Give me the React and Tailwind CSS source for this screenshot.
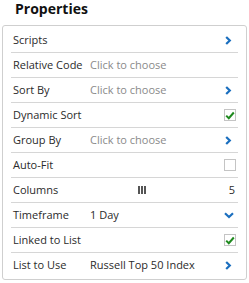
import React from "react";

function ChevronRight() {
  return (
    <svg width="7" height="9" viewBox="0 0 7 9" className="text-[#1b6fbf]">
      <path d="M1.2 1 L4.8 4.5 L1.2 8" fill="none" stroke="currentColor" strokeWidth="2.2" />
    </svg>
  );
}

function ChevronDown() {
  return (
    <svg width="10" height="7" viewBox="0 0 10 7" className="text-[#1b6fbf]">
      <path d="M1 1.3 L5 5 L9 1.3" fill="none" stroke="currentColor" strokeWidth="2.2" />
    </svg>
  );
}

function Checkbox({ checked }) {
  return (
    <div className="w-[12px] h-[12px] border border-[#c4c4c4] bg-white flex items-center justify-center">
      {checked && (
        <svg width="10" height="9" viewBox="0 0 10 9">
          <path d="M1.2 4.6 L3.8 7.2 L8.8 1.5" fill="none" stroke="#1f8a1f" strokeWidth="2" />
        </svg>
      )}
    </div>
  );
}

const rows = [
  { label: "Scripts", right: "chevron" },
  { label: "Relative Code", value: "Click to choose", muted: true },
  { label: "Sort By", value: "Click to choose", muted: true, right: "chevron" },
  { label: "Dynamic Sort", right: "checked" },
  { label: "Group By", value: "Click to choose", muted: true, right: "chevron" },
  { label: "Auto-Fit", right: "unchecked" },
  { label: "Columns", right: "columns" },
  { label: "Timeframe", value: "1 Day", right: "down" },
  { label: "Linked to List", right: "checked" },
  { label: "List to Use", value: "Russell Top 50 Index", right: "chevron" },
];

export default function App() {
  return (
    <div className="w-[249px] h-[283px] bg-white font-['Open_Sans',sans-serif] text-[#2b2b2b]">
      {/* Title */}
      <div className="h-[25px] pl-[15px] pt-[1px] text-[14px] font-bold leading-[16px] text-[#111]">
        Properties
      </div>

      {/* Panel */}
      <div className="ml-[2px] w-[245px] border border-[#cfcfcf] rounded-[3px] px-2 pt-[2px] pb-[1px]">
        {rows.map((row, i) => (
          <div
            key={row.label}
            className={`h-[25px] flex items-center pl-[2px] text-[11px] ${
              i < rows.length - 1 ? "border-b border-[#d6d6d6]" : ""
            }`}
          >
            <span className="w-[77px] shrink-0 whitespace-nowrap">{row.label}</span>
            <span className={`flex-1 flex items-center whitespace-nowrap ${row.muted ? "text-[#8a8a8a]" : ""}`}>
              {row.value}
              {row.right === "columns" && (
                <span className="ml-[48px] flex gap-[1px]">
                  <span className="w-[2px] h-[8px] bg-[#555]" />
                  <span className="w-[2px] h-[8px] bg-[#555]" />
                  <span className="w-[2px] h-[8px] bg-[#555]" />
                </span>
              )}
            </span>
            {row.right === "chevron" && (
              <div className="mr-[6px] flex items-center">
                <ChevronRight />
              </div>
            )}
            {row.right === "down" && (
              <div className="mr-[4px] flex items-center">
                <ChevronDown />
              </div>
            )}
            {row.right === "checked" && (
              <div className="mr-[2px]">
                <Checkbox checked />
              </div>
            )}
            {row.right === "unchecked" && (
              <div className="mr-[2px]">
                <Checkbox />
              </div>
            )}
            {row.right === "columns" && <span className="mr-[3px]">5</span>}
          </div>
        ))}
      </div>
    </div>
  );
}
